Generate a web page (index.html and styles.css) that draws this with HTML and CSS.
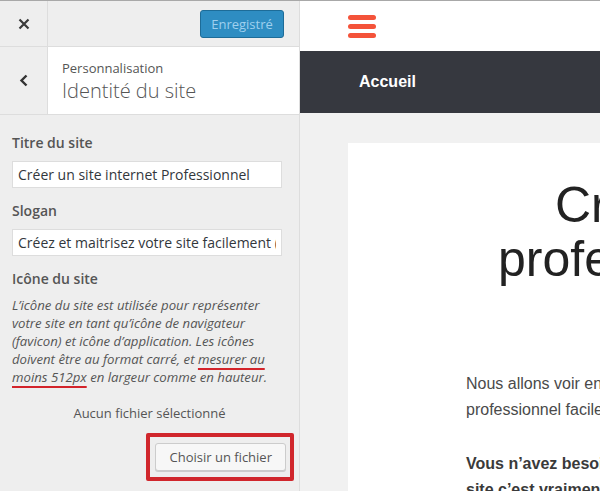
FILE: index.html
```html
<!DOCTYPE html>
<html lang="fr">
<head>
  <meta charset="UTF-8">
  <meta name="viewport" content="width=device-width, initial-scale=1.0">
  <title>Personnaliser : Identité du site</title>
  <link rel="stylesheet" href="styles.css">
</head>
<body>
  <div class="app">
    <aside class="sidebar">
      <div class="top-bar">
        <div class="icon-btn">
          <svg width="12" height="12" viewBox="0 0 12 12"><path d="M1.5 1.5 L10.5 10.5 M10.5 1.5 L1.5 10.5" stroke="#3a3a3a" stroke-width="2.2" fill="none"/></svg>
        </div>
        <button class="save-btn">Enregistré</button>
      </div>

      <div class="section-head">
        <div class="icon-btn">
          <svg width="10" height="13" viewBox="0 0 10 13"><path d="M7.5 1.5 L2.5 6.5 L7.5 11.5" stroke="#333" stroke-width="2.4" fill="none"/></svg>
        </div>
        <div class="section-title">
          <span class="crumb">Personnalisation</span>
          <h3>Identité du site</h3>
        </div>
      </div>

      <div class="controls">
        <label class="ctl-label">Titre du site</label>
        <input class="ctl-input" type="text" value="Créer un site internet Professionnel">

        <label class="ctl-label">Slogan</label>
        <input class="ctl-input" type="text" value="Créez et maitrisez votre site facilement (en 2 heures)">

        <label class="ctl-label">Icône du site</label>
        <p class="desc">L’icône du site est utilisée pour représenter votre site en tant qu’icône de navigateur (favicon) et icône d’application. Les icônes doivent être au format carré, et <span class="mark">mesurer au moins 512px</span> en largeur comme en hauteur.</p>

        <p class="no-file">Aucun fichier sélectionné</p>
        <div class="file-row">
          <span class="highlight">
            <button class="file-btn">Choisir un fichier</button>
          </span>
        </div>
      </div>
    </aside>

    <main class="preview">
      <div class="site-header">
        <div class="burger"><span></span><span></span><span></span></div>
      </div>
      <nav class="site-nav">Accueil</nav>
      <div class="site-main">
        <article class="card">
          <h1>Créer un site internet<br>professionnel facilement</h1>
          <p class="lead">Nous allons voir ensemble comment créer un site internet<br>professionnel facilement et sans connaissances techniques.</p>
          <p class="lead strong">Vous n’avez besoin d’aucune compétence technique : créer un<br>site c’est vraiment à la portée de tout le monde.</p>
        </article>
      </div>
    </main>
  </div>
</body>
</html>
```

FILE: styles.css
```css
body {
  margin: 0;
  padding: 0;
  font-family: 'Open Sans', sans-serif;
  background-color: #f1f1f1;
  overflow: hidden;
}

.app {
  display: flex;
  height: 490px;
  border-top: 1px solid #a8a8a8;
}

/* sidebar */

.sidebar {
  width: 299px;
  flex-shrink: 0;
  background-color: #eee;
  border-right: 1px solid #ddd;
  color: #555;
}

.top-bar {
  display: flex;
  align-items: center;
  height: 45px;
  border-bottom: 1px solid #ddd;
}

.icon-btn {
  width: 47px;
  align-self: stretch;
  display: flex;
  align-items: center;
  justify-content: center;
  border-right: 1px solid #ddd;
}

.save-btn {
  margin-left: auto;
  margin-right: 15px;
  height: 28px;
  width: 84px;
  padding: 0;
  font-family: 'Open Sans', sans-serif;
  font-size: 13px;
  color: #9fd0ee;
  background-color: #2e8dc2;
  border: 1px solid #1d6c98;
  border-radius: 3px;
}

.section-head {
  display: flex;
  height: 67px;
  border-bottom: 1px solid #ddd;
}

.section-title {
  flex: 1;
  background-color: #fff;
  padding: 12px 0 0 14px;
}

.crumb {
  display: block;
  font-size: 13px;
  line-height: 18px;
  color: #555;
}

.section-title h3 {
  margin: 0;
  font-size: 20px;
  font-weight: 300;
  line-height: 28px;
  color: #555;
}

.controls {
  padding: 18px 12px 0 12px;
}

.ctl-label {
  display: block;
  font-size: 14px;
  font-weight: 600;
  line-height: 20px;
  margin-bottom: 8px;
}

.ctl-input {
  display: block;
  box-sizing: border-box;
  width: 270px;
  height: 27px;
  margin: 0 0 13px 0;
  padding: 0 5px;
  font-family: 'Open Sans', sans-serif;
  font-size: 14px;
  color: #32373c;
  background-color: #fff;
  border: 1px solid #ddd;
}

.desc {
  max-width: 266px;
  margin: -1px 0 0 0;
  font-size: 13.2px;
  font-style: italic;
  line-height: 18px;
  color: #555;
}

.mark {
  text-decoration: underline;
  text-decoration-color: #d3242b;
  text-decoration-thickness: 2px;
  text-underline-offset: 4px;
}

.no-file {
  margin: 18px 0 0 0;
  text-align: center;
  font-size: 13px;
  line-height: 18px;
}

.file-row {
  display: flex;
  justify-content: flex-end;
  margin: 11px -7px 0 0;
}

/* red box drawn round the button */
.highlight {
  display: flex;
  padding: 6px 4px 6px 5px;
  border: 4px solid #d0262c;
  border-radius: 2px;
}

.file-btn {
  height: 28px;
  padding: 0 13px;
  font-family: 'Open Sans', sans-serif;
  font-size: 13px;
  color: #555;
  background-color: #f7f7f7;
  border: 1px solid #ccc;
  border-radius: 3px;
  box-shadow: 0 1px 0 #ccc;
}

/* preview */

.preview {
  flex: 1;
  min-width: 0;
  overflow: hidden;
  font-family: 'Liberation Sans', Arial, sans-serif;
}

.site-header {
  height: 50px;
  background-color: #fff;
  padding-left: 48px;
  box-sizing: border-box;
  padding-top: 14px;
}

.burger {
  width: 28px;
}

.burger span {
  display: block;
  height: 5px;
  margin-bottom: 4px;
  border-radius: 3px;
  background-color: #f4533a;
}

.site-nav {
  height: 62px;
  background-color: #36383f;
  color: #fff;
  font-weight: bold;
  font-size: 16px;
  line-height: 62px;
  padding-left: 59px;
}

.site-main {
  padding: 30px 0 0 48px;
}

.card {
  background-color: #fff;
  width: 900px;
  padding: 35px 0 0 118px;
  white-space: nowrap;
}

.card h1 {
  margin: 0 0 85px 32px;
  font-size: 50px;
  font-weight: normal;
  line-height: 54px;
  color: #222;
  text-indent: 57px;
}

.lead {
  margin: 0 0 28px 0;
  font-size: 16px;
  line-height: 26px;
  color: #4a4a4a;
}

.lead.strong {
  font-weight: bold;
  color: #3a3a3a;
}
```
